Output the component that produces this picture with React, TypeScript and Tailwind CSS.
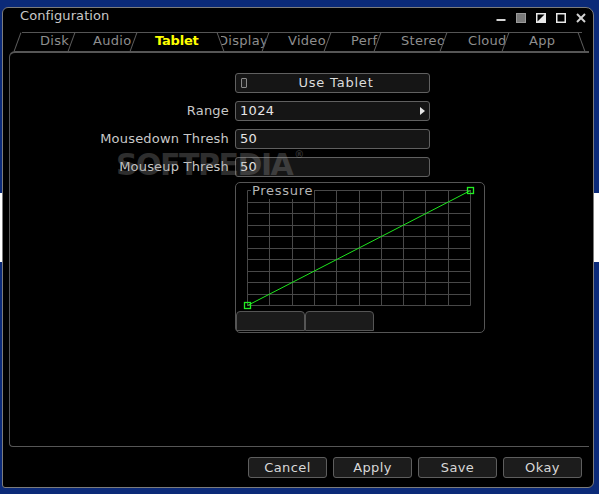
import React from "react";

type Tab = { label: string; w: string; pl: string; sep: "/" | "\\"; active?: boolean };

const tabs: Tab[] = [
  { label: "Disk", w: "w-[54px]", pl: "pl-[22px]", sep: "/" },
  { label: "Audio", w: "w-[62px]", pl: "pl-[21px]", sep: "/" },
  { label: "Tablet", w: "w-[87px]", pl: "pl-[21px]", sep: "/", active: true },
  { label: "Display", w: "w-[45px]", pl: "pl-[0px]", sep: "\\" },
  { label: "Video", w: "w-[62px]", pl: "pl-[22px]", sep: "/" },
  { label: "Perf", w: "w-[50px]", pl: "pl-[23px]", sep: "/" },
  { label: "Stereo", w: "w-[66px]", pl: "pl-[23px]", sep: "/" },
  { label: "Cloud", w: "w-[62px]", pl: "pl-[24px]", sep: "/" },
  { label: "App", w: "w-[76px]", pl: "pl-[23px]", sep: "/" },
];

function Sep({ dir }: { dir: "/" | "\\" }) {
  return (
    <div
      className={
        dir === "/"
          ? "absolute left-[-1px] top-[-1px] h-[20px] w-px bg-[#5c5c5c] rotate-[20deg]"
          : "absolute left-[-1px] top-[-1px] h-[20px] w-px bg-[#5c5c5c] rotate-[-20deg]"
      }
    />
  );
}

function Row({ label, children }: { label: string; children: React.ReactNode }) {
  return (
    <div className="flex items-center h-[20px]">
      <div className="w-[219px] text-right text-[#c8c8c8] tracking-[0.2px] whitespace-nowrap">{label}</div>
      <div className="ml-[6px] w-[195px] h-[20px]">{children}</div>
    </div>
  );
}

function Field({ value, arrow }: { value: string; arrow?: boolean }) {
  return (
    <div className="h-full w-full border border-[#606060] rounded-[3px] bg-[#151515] flex items-center pl-[4px] pr-[4px] text-[#e6e6e6] tracking-[0.3px]">
      <span className="flex-1">{value}</span>
      {arrow && (
        <svg width="5" height="8" viewBox="0 0 5 8">
          <polygon points="0,0 5,4 0,8" fill="#e6e6e6" />
        </svg>
      )}
    </div>
  );
}

function Btn({ label }: { label: string }) {
  return (
    <div className="w-[79px] h-[21px] border border-[#5e5e5e] rounded-[3px] bg-[#1c1c1c] text-[#d8d8d8] flex items-center justify-center tracking-[0.4px]">
      {label}
    </div>
  );
}

export default function App() {
  const vx = Array.from({ length: 11 }, (_, i) => Math.round(11 + i * 22.3) + 0.5);
  const hy = Array.from({ length: 11 }, (_, j) => Math.round(7 + j * 11.5) + 0.5);
  return (
    <div className="relative w-[599px] h-[494px] overflow-hidden bg-[#0b2a78] pt-[7px] pl-[2px] font-['DejaVu_Sans',sans-serif] text-[13px] leading-[16px]">
      <div className="absolute left-0 top-[193px] w-[2px] h-[69px] bg-white" />
      <div className="absolute right-0 top-[193px] w-[5px] h-[69px] bg-white" />
      <div className="relative w-[592px] h-[481px] bg-black border border-[#7c7c7c] rounded-tl-[6px] rounded-tr-[8px] rounded-br-[6px] rounded-bl-[3px] flex flex-col">
        {/* title bar */}
        <div className="h-[24px] flex items-start justify-between pl-[17px] pr-[7px]">
          <span className="text-[#c8c8c8] tracking-[0.1px]">Configuration</span>
          <div className="flex gap-[10px] pt-[5px]">
            <svg width="10" height="10" viewBox="0 0 10 10">
              <rect x="0.5" y="6" width="9" height="2" fill="#d4d4d4" />
            </svg>
            <svg width="10" height="10" viewBox="0 0 10 10">
              <rect x="0.5" y="0.5" width="9" height="9" fill="#7a7a7a" stroke="#9a9a9a" />
            </svg>
            <svg width="10" height="10" viewBox="0 0 10 10">
              <rect x="0.75" y="0.75" width="8.5" height="8.5" fill="none" stroke="#e8e8e8" strokeWidth="1.5" />
              <polygon points="9.25,0.75 9.25,9.25 0.75,9.25" fill="#e8e8e8" />
            </svg>
            <svg width="10" height="10" viewBox="0 0 10 10">
              <rect x="0.75" y="0.75" width="8.5" height="8.5" fill="none" stroke="#e8e8e8" strokeWidth="1.5" />
            </svg>
            <svg width="10" height="10" viewBox="0 0 10 10">
              <line x1="1" y1="1" x2="9" y2="9" stroke="#d4d4d4" strokeWidth="2" />
              <line x1="9" y1="1" x2="1" y2="9" stroke="#d4d4d4" strokeWidth="2" />
            </svg>
          </div>
        </div>
        {/* tab bar */}
        <div className="ml-[19px] w-[560px] h-px bg-[#555555]" />
        <div className="ml-[15px] h-[18px] flex">
          {tabs.map((t) => (
            <div key={t.label} className={`relative h-full ${t.w}`}>
              <Sep dir={t.sep} />
              <div
                className={`h-full overflow-hidden whitespace-nowrap ${t.pl} ${
                  t.active ? "text-[#ffff00] font-bold tracking-[-0.2px]" : "text-[#8e8e8e] tracking-[0.3px]"
                }`}
              >
                {t.label === "Display" ? <span className="ml-[-3px]">{t.label}</span> : t.label}
              </div>
            </div>
          ))}
          <div className="relative h-full w-0">
            <Sep dir="\\" />
          </div>
        </div>
        {/* panel */}
        <div className="ml-[6px] w-[580px] h-[396px] border-t-2 border-l border-b border-[#565656] rounded-tl-[6px] rounded-bl-[4px] flex flex-col pt-[20px]">
          <div className="flex flex-col gap-[8px]">
            <div className="flex items-center h-[20px]">
              <div className="w-[219px]" />
              <div className="ml-[6px] w-[195px] h-[20px] border border-[#606060] rounded-[3px] bg-[#151515] flex items-center pl-[5px]">
                <div className="w-[6px] h-[10px] border border-[#8a8a8a] rounded-[1px] bg-[#222]" />
                <div className="flex-1 text-center text-[#dcdcdc] tracking-[0.8px] pr-[4px]">Use Tablet</div>
              </div>
            </div>
            <Row label="Range">
              <Field value="1024" arrow />
            </Row>
            <Row label="Mousedown Thresh">
              <Field value="50" />
            </Row>
            <Row label="Mouseup Thresh">
              <Field value="50" />
            </Row>
          </div>
          {/* pressure */}
          <div className="relative ml-[225px] mt-[5px] w-[250px] h-[151px] border border-[#555555] rounded-[5px] flex flex-col">
            <svg width="248" height="128" viewBox="0 0 248 128">
              {vx.map((x) => (
                <line key={"v" + x} x1={x} y1={7.5} x2={x} y2={122.5} stroke="#484848" strokeWidth="1" />
              ))}
              {hy.map((y) => (
                <line key={"h" + y} x1={11.5} y1={y} x2={234.5} y2={y} stroke="#484848" strokeWidth="1" />
              ))}
              <line x1="11.5" y1="122.5" x2="234.5" y2="7.5" stroke="#1ee61e" strokeWidth="1" />
              <rect x="8.5" y="119.5" width="6" height="6" fill="none" stroke="#22ee22" strokeWidth="1.3" />
              <rect x="231.5" y="4.5" width="6" height="6" fill="none" stroke="#22ee22" strokeWidth="1.3" />
            </svg>
            <div className="absolute left-[15px] top-0 bg-black px-[1px] text-[#b4b4b4] tracking-[0.7px]">Pressure</div>
            <div className="flex">
              <div className="w-[69px] h-[20px] border border-[#555555] rounded-t-[4px] bg-[#1b1b1b]" />
              <div className="w-[69px] h-[20px] border border-[#555555] rounded-t-[4px] bg-[#1b1b1b]" />
            </div>
          </div>
        </div>
        {/* buttons */}
        <div className="flex justify-end gap-[6px] pr-[11px] mt-[10px]">
          <Btn label="Cancel" />
          <Btn label="Apply" />
          <Btn label="Save" />
          <Btn label="Okay" />
        </div>
      </div>
      {/* watermark */}
      <div className="pointer-events-none absolute left-[116px] top-[150px] flex items-start text-[#9a9a9a] opacity-30 font-bold text-[30px] leading-[30px] tracking-[-1.5px]">
        <span>SOFTPEDIA</span>
        <span className="text-[10px] leading-[10px] ml-[2px]">®</span>
      </div>
    </div>
  );
}
